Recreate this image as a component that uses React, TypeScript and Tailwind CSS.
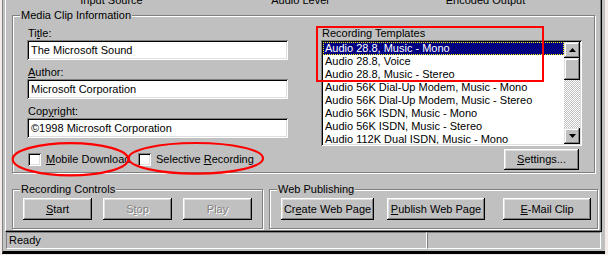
import type { ReactNode } from "react";

const raised =
  "shadow-[inset_-1px_-1px_0_#000,inset_1px_1px_0_#fff,inset_-2px_-2px_0_#808080,inset_2px_2px_0_#dfdfdf]";
const sunken =
  "shadow-[inset_1px_1px_0_#808080,inset_-1px_-1px_0_#fff,inset_2px_2px_0_#000,inset_-2px_-2px_0_#dfdfdf]";
const sbButton =
  "shadow-[inset_-1px_-1px_0_#000,inset_1px_1px_0_#dfdfdf,inset_-2px_-2px_0_#808080,inset_2px_2px_0_#fff]";
const etched = "relative border border-[#808080] shadow-[inset_1px_1px_0_#fff,1px_1px_0_#fff]";

const templates = [
  "Audio 28.8, Music - Mono",
  "Audio 28.8, Voice",
  "Audio 28.8, Music - Stereo",
  "Audio 56K Dial-Up Modem, Music - Mono",
  "Audio 56K Dial-Up Modem, Music - Stereo",
  "Audio 56K ISDN, Music - Mono",
  "Audio 56K ISDN, Music - Stereo",
  "Audio 112K Dual ISDN, Music - Mono",
];

function U({ children }: { children: ReactNode }) {
  return <span className="underline underline-offset-[1px]">{children}</span>;
}

function GroupLabel({ children }: { children: ReactNode }) {
  return (
    <span className="absolute left-[7px] top-[-7px] bg-[#c0c0c0] px-[1px] leading-[13px] whitespace-nowrap">
      {children}
    </span>
  );
}

function Button({ w, disabled, children }: { w: string; disabled?: boolean; children: ReactNode }) {
  return (
    <div
      className={`${w} h-[22px] flex items-center justify-center leading-[13px] whitespace-nowrap ${raised} ${
        disabled ? "text-[#808080] [text-shadow:1px_1px_0_#fff]" : ""
      }`}
    >
      {children}
    </div>
  );
}

function Field({ value }: { value: string }) {
  return (
    <div className={`h-[20px] bg-white flex items-center pl-[4px] leading-[13px] whitespace-nowrap ${sunken}`}>
      {value}
    </div>
  );
}

function Check({ children }: { children: ReactNode }) {
  return (
    <div className="flex items-center">
      <div className={`ml-[1px] w-[13px] h-[13px] bg-white ${sunken}`} />
      <span className="ml-[5px] leading-[13px] whitespace-nowrap">{children}</span>
    </div>
  );
}

function Arrow({ up }: { up?: boolean }) {
  return (
    <svg width="7" height="4" viewBox="0 0 7 4">
      <path d={up ? "M3.5 0 L7 4 L0 4 Z" : "M0 0 L7 0 L3.5 4 Z"} fill="#000" />
    </svg>
  );
}

export default function App() {
  return (
    <div className="relative w-[608px] h-[255px] overflow-hidden bg-[#f4ecea] font-['Liberation_Sans',Arial,sans-serif] text-[11px] text-black">
      <div className="ml-[2px] w-[603px] h-[254px] border-l border-l-[#808080] border-b-[3px] border-b-black bg-[#c0c0c0] flex flex-col">
        {/* tab panel */}
        <div className="ml-[2px] w-[597px] h-[232px] border-l border-l-white border-r border-r-black border-b border-b-black">
          <div className="h-full border-r border-r-[#808080] border-b border-b-[#808080] flex flex-col">
            <div className="h-[15px] overflow-hidden flex items-start">
              <div className="w-[211px] -mt-[6px] leading-[13px] text-center">Input Source</div>
              <div className="w-[166px] -mt-[6px] leading-[13px] text-center">Audio Level</div>
              <div className="w-[205px] -mt-[6px] leading-[13px] text-center">Encoded Output</div>
            </div>

            {/* media clip information */}
            <div className={`ml-[6px] w-[583px] h-[158px] ${etched} flex`}>
              <GroupLabel>Media Clip Information</GroupLabel>

              <div className="ml-[14px] pt-[10px] w-[261px] flex flex-col">
                <div className="pl-[1px] leading-[14px]">
                  Ti<U>t</U>le:
                </div>
                <Field value="The Microsoft Sound" />
                <div className="mt-[5px] pl-[1px] leading-[14px]">
                  <U>A</U>uthor:
                </div>
                <Field value="Microsoft Corporation" />
                <div className="mt-[5px] pl-[1px] leading-[14px]">
                  Cop<U>y</U>right:
                </div>
                <Field value="©1998 Microsoft Corporation" />
                <div className="mt-[15px] flex h-[13px] items-center">
                  <div className="w-[110px]">
                    <Check>
                      <U>M</U>obile Download
                    </Check>
                  </div>
                  <Check>
                    Selective <U>R</U>ecording
                  </Check>
                </div>
              </div>

              <div className="ml-[33px] pt-[10px] w-[261px] flex flex-col">
                <div className="pl-[1px] leading-[14px]">Recording Templates</div>
                <div className={`h-[106px] bg-white p-[2px] flex ${sunken}`}>
                  <div className="w-[241px] h-[102px] overflow-hidden">
                    {templates.map((t, i) => (
                      <div
                        key={t}
                        className={`h-[13px] leading-[13px] pl-[2px] whitespace-nowrap ${
                          i === 0
                            ? "bg-[#000080] text-white outline-1 outline-dotted outline-[#ffff00] -outline-offset-1"
                            : ""
                        }`}
                      >
                        {t}
                      </div>
                    ))}
                  </div>
                  <div className="w-[16px] h-[102px] flex flex-col">
                    <div className={`h-[16px] bg-[#c0c0c0] flex items-center justify-center ${sbButton}`}>
                      <Arrow up />
                    </div>
                    <div className={`h-[22px] bg-[#c0c0c0] ${sbButton}`} />
                    <div className="flex-1 bg-[repeating-conic-gradient(#c0c0c0_0_25%,#fff_0_50%)] bg-[length:2px_2px]" />
                    <div className={`h-[16px] bg-[#c0c0c0] flex items-center justify-center ${sbButton}`}>
                      <Arrow />
                    </div>
                  </div>
                </div>
                <div className="mt-[3px] mr-[3px] self-end">
                  <div className={`w-[75px] h-[21px] flex items-center justify-center leading-[13px] ${raised}`}>
                    <span>
                      <U>S</U>ettings...
                    </span>
                  </div>
                </div>
              </div>
            </div>

            {/* bottom groups */}
            <div className="mt-[16px] flex">
              <div className={`ml-[6px] w-[251px] h-[40px] ${etched} flex gap-[11px] pl-[10px] pt-[8px]`}>
                <GroupLabel>Recording Controls</GroupLabel>
                <Button w="w-[69px]">
                  <span>
                    <U>S</U>tart
                  </span>
                </Button>
                <Button w="w-[69px]" disabled>
                  <span>
                    S<U>t</U>op
                  </span>
                </Button>
                <Button w="w-[69px]" disabled>
                  <span>Play</span>
                </Button>
              </div>
              <div className={`ml-[6px] w-[329px] h-[40px] ${etched} flex pl-[11px] pt-[8px]`}>
                <GroupLabel>Web Publishing</GroupLabel>
                <Button w="w-[93px]">
                  <span>
                    Cr<U>e</U>ate Web Page
                  </span>
                </Button>
                <div className="ml-[13px]">
                  <Button w="w-[98px]">
                    <span>
                      <U>P</U>ublish Web Page
                    </span>
                  </Button>
                </div>
                <div className="ml-[18px]">
                  <Button w="w-[88px]">
                    <span>
                      <U>E</U>-Mail Clip
                    </span>
                  </Button>
                </div>
              </div>
            </div>
          </div>
        </div>

        {/* status bar */}
        <div className="ml-[3px] flex h-[17px]">
          <div className="w-[421px] h-full border border-t-[#808080] border-l-[#808080] border-b-white border-r-white flex items-center pl-[2px] leading-[13px]">
            Ready
          </div>
          <div className="w-[174px] h-full border border-t-[#808080] border-l-[#808080] border-b-white border-r-white" />
        </div>
      </div>

      {/* red annotations */}
      <svg className="absolute inset-0 pointer-events-none" width="608" height="255" viewBox="0 0 608 255">
        <rect x="317" y="27" width="226" height="54" fill="none" stroke="#ff0000" strokeWidth="2" />
        <ellipse cx="70.5" cy="159.2" rx="57.8" ry="16.1" fill="none" stroke="#ff0000" strokeWidth="2.2" />
        <ellipse cx="195.8" cy="158.3" rx="67.2" ry="15.3" fill="none" stroke="#ff0000" strokeWidth="2.2" />
      </svg>
    </div>
  );
}
